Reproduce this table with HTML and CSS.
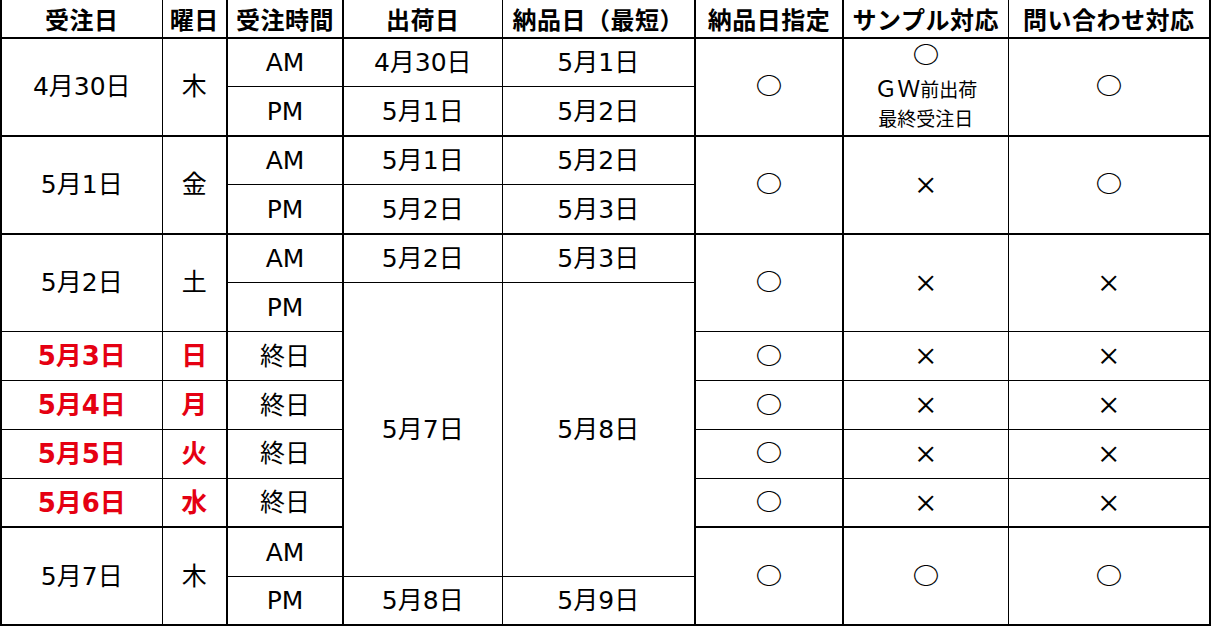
FILE: index.html
```html
<!DOCTYPE html>
<html lang="ja">
<head>
<meta charset="utf-8">
<title>GW 受注スケジュール</title>
<link rel="stylesheet" href="styles.css">
</head>
<body>
<table class="sched">
  <colgroup>
    <col class="c1"><col class="c2"><col class="c3"><col class="c4"><col class="c5"><col class="c6"><col class="c7"><col class="c8">
  </colgroup>
  <thead>
    <tr>
      <th>受注日</th><th>曜日</th><th class="bl">受注時間</th><th class="bl">出荷日</th><th>納品日（最短）</th><th class="bl">納品日指定</th><th class="bl">サンプル対応</th><th>問い合わせ対応</th>
    </tr>
  </thead>
  <tbody>
    <tr class="grp">
      <td rowspan="2">4月30日</td><td rowspan="2">木</td><td class="bl">AM</td><td class="bl">4月30日</td><td>5月1日</td>
      <td rowspan="2" class="bl"><span class="mk">○</span></td>
      <td rowspan="2" class="bl note"><span class="ln top"><span class="mk">○</span></span><span class="ln gw"><span class="fw">ＧＷ</span>前出荷</span><span class="ln sm">最終受注日</span></td>
      <td rowspan="2"><span class="mk">○</span></td>
    </tr>
    <tr>
      <td class="bl">PM</td><td class="bl">5月1日</td><td>5月2日</td>
    </tr>
    <tr class="grp">
      <td rowspan="2">5月1日</td><td rowspan="2">金</td><td class="bl">AM</td><td class="bl">5月1日</td><td>5月2日</td>
      <td rowspan="2" class="bl"><span class="mk">○</span></td>
      <td rowspan="2" class="bl"><span class="x">×</span></td>
      <td rowspan="2"><span class="mk">○</span></td>
    </tr>
    <tr>
      <td class="bl">PM</td><td class="bl">5月2日</td><td>5月3日</td>
    </tr>
    <tr class="grp">
      <td rowspan="2">5月2日</td><td rowspan="2">土</td><td class="bl">AM</td><td class="bl">5月2日</td><td>5月3日</td>
      <td rowspan="2" class="bl"><span class="mk">○</span></td>
      <td rowspan="2" class="bl"><span class="x">×</span></td>
      <td rowspan="2"><span class="x">×</span></td>
    </tr>
    <tr>
      <td class="bl">PM</td><td rowspan="6" class="bl">5月7日</td><td rowspan="6">5月8日</td>
    </tr>
    <tr>
      <td class="hol">5月3日</td><td class="hol">日</td><td class="bl">終日</td>
      <td class="bl"><span class="mk">○</span></td><td class="bl"><span class="x">×</span></td><td><span class="x">×</span></td>
    </tr>
    <tr>
      <td class="hol">5月4日</td><td class="hol">月</td><td class="bl">終日</td>
      <td class="bl"><span class="mk">○</span></td><td class="bl"><span class="x">×</span></td><td><span class="x">×</span></td>
    </tr>
    <tr>
      <td class="hol">5月5日</td><td class="hol">火</td><td class="bl">終日</td>
      <td class="bl"><span class="mk">○</span></td><td class="bl"><span class="x">×</span></td><td><span class="x">×</span></td>
    </tr>
    <tr>
      <td class="hol">5月6日</td><td class="hol">水</td><td class="bl">終日</td>
      <td class="bl"><span class="mk">○</span></td><td class="bl"><span class="x">×</span></td><td><span class="x">×</span></td>
    </tr>
    <tr class="grp">
      <td rowspan="2">5月7日</td><td rowspan="2">木</td><td class="bl">AM</td>
      <td rowspan="2" class="bl"><span class="mk">○</span></td>
      <td rowspan="2" class="bl"><span class="mk">○</span></td>
      <td rowspan="2"><span class="mk">○</span></td>
    </tr>
    <tr>
      <td class="bl">PM</td><td class="bl">5月8日</td><td>5月9日</td>
    </tr>
  </tbody>
</table>
</body>
</html>
```

FILE: styles.css
```css
html, body {
  margin: 0;
  padding: 0;
  background: #ffffff;
}

.sched {
  border-collapse: collapse;
  table-layout: fixed;
  width: 1211px;
  border-left: 2px solid #000;
  border-right: 2px solid #000;
  border-bottom: 2px solid #000;
  font-family: "DejaVu Sans", "Noto Sans CJK JP", sans-serif;
  font-size: 25px;
  color: #000;
}

.c1 { width: 161px; }
.c2 { width: 65px; }
.c3 { width: 116px; }
.c4 { width: 159px; }
.c5 { width: 193px; }
.c6 { width: 148px; }
.c7 { width: 165px; }
.c8 { width: 202px; }

.sched th,
.sched td {
  border: 1px solid #000;
  padding: 0;
  text-align: center;
  vertical-align: middle;
  line-height: 1;
  white-space: nowrap;
}

.sched thead tr {
  height: 38px;
}

.sched th {
  border-top: none;
  border-bottom: 2px solid #000;
  font-family: "Noto Sans CJK JP", sans-serif;
  font-weight: 700;
  font-size: 24px;
  letter-spacing: 0.5px;
}

.sched tbody tr {
  height: 48.95px;
}

.sched tr.grp > td {
  border-top: 2px solid #000;
}

.sched .bl {
  border-left: 2px solid #000;
}

.hol {
  color: #e50012;
  font-weight: 700;
  font-size: 26px;
}

.mk {
  display: inline-block;
  font-family: "Noto Sans CJK JP", sans-serif;
  font-weight: 700;
  font-size: 26px;
  line-height: 24px;
  transform: scale(1.02, 0.86);
}

.x {
  font-family: "Noto Sans CJK JP", sans-serif;
  font-weight: 500;
  font-size: 24px;
  line-height: 24px;
}

.note .ln {
  display: block;
}

.note .top {
  line-height: 28px;
  height: 28px;
}

.note .gw {
  font-family: "Noto Sans CJK JP", sans-serif;
  font-size: 19px;
  line-height: 34px;
  height: 34px;
}

.note .fw {
  font-size: 23px;
}

.note .sm {
  font-family: "Noto Sans CJK JP", sans-serif;
  font-size: 19px;
  line-height: 28px;
  height: 28px;
}
```
